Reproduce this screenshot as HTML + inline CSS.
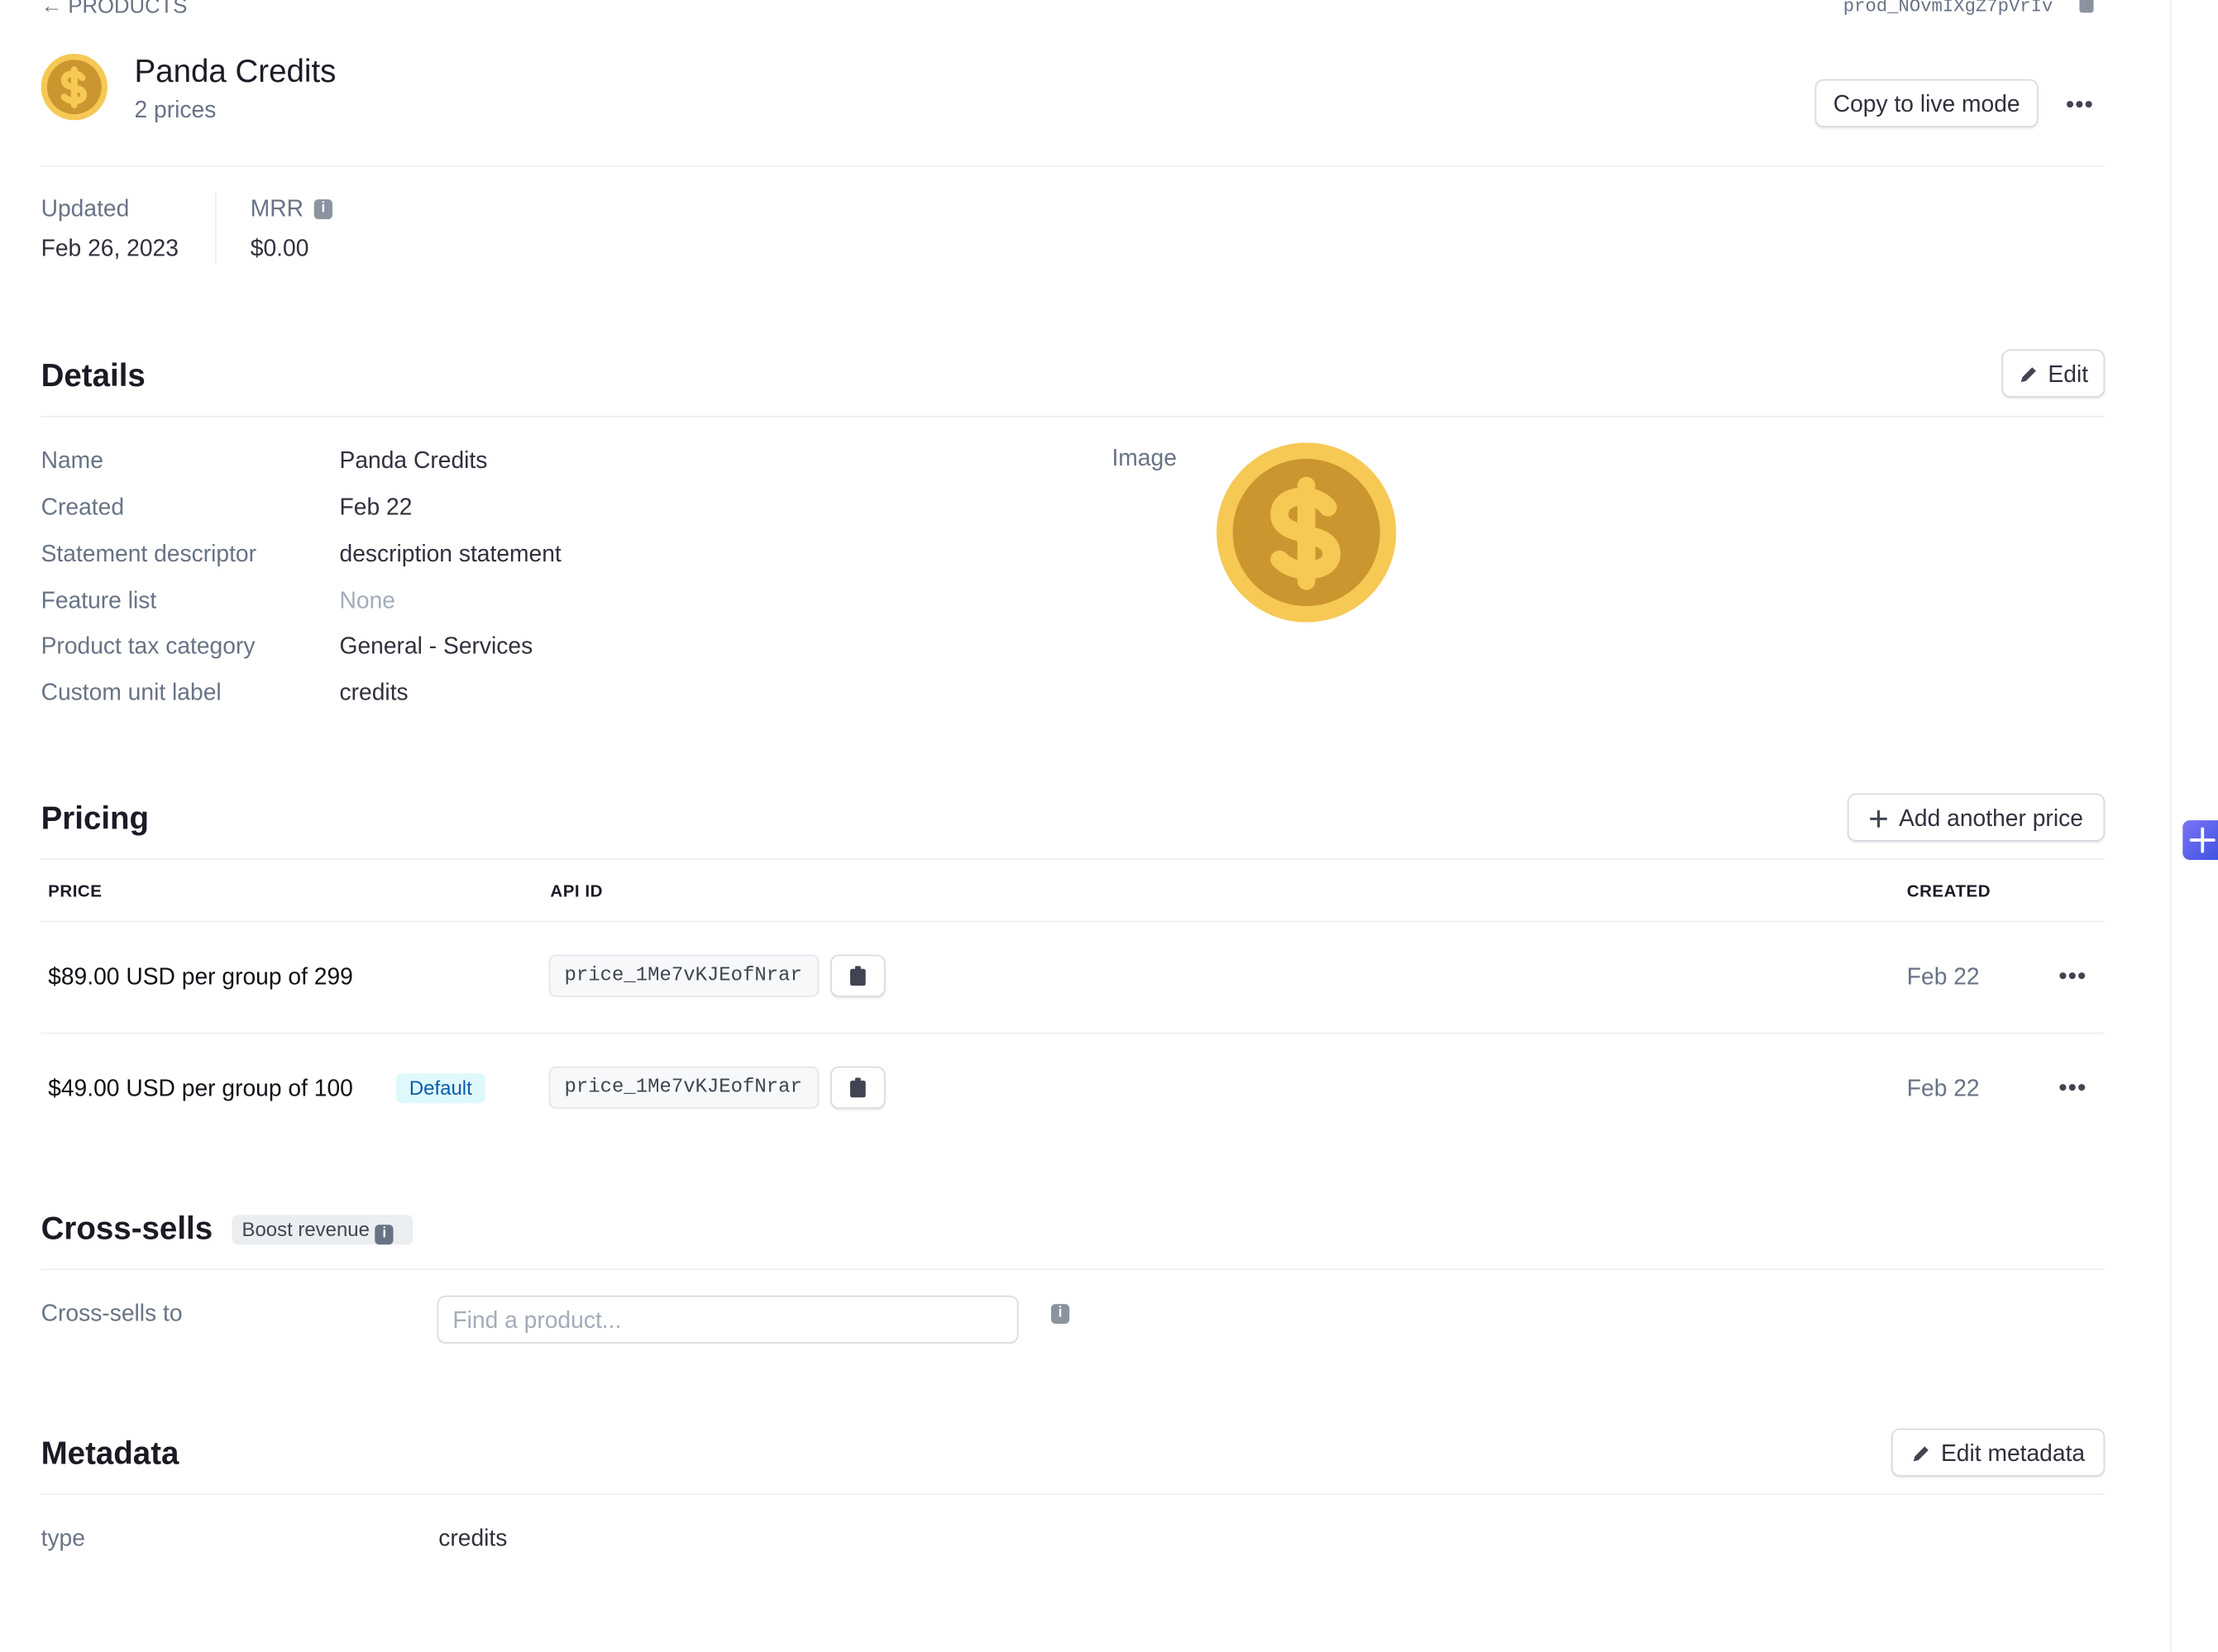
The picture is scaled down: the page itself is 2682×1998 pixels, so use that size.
<!DOCTYPE html>
<html><head><meta charset="utf-8"><style>
html,body{margin:0;padding:0;background:#fff;overflow:hidden}
body{width:2682px;height:1998px;position:relative}
#w{position:absolute;left:0;top:0;width:1568px;height:1168px;transform:scale(1.7105);transform-origin:0 0;font-family:"Liberation Sans",sans-serif;color:#30313d}
.a{position:absolute;white-space:nowrap}
.g{color:#687385}
.hr{position:absolute;left:29px;width:1459px;height:1px;background:#ebeef1}
.h{font-size:22.5px;font-weight:bold;color:#1a1b25}
.btn{position:absolute;border:1px solid #d5dbe1;border-radius:6px;background:#fff;box-shadow:0 1px 1px rgba(0,0,0,.08);box-sizing:border-box;font-size:16.5px;color:#30313d;display:flex;align-items:center;justify-content:center;gap:7px;padding-top:2px}
.m{font-family:"Liberation Mono",monospace}
.code{position:absolute;border:1px solid #e3e6ea;background:#f7f8fa;border-radius:5px;box-sizing:border-box;font-size:14px;display:flex;align-items:center;padding-left:10px;color:#414552}
.th{font-size:12px;font-weight:bold;color:#1a1b25;letter-spacing:.3px}
.r{font-size:16.5px}
.dots{position:absolute;font-size:11px;color:#414552;letter-spacing:0px}
</style></head><body><div id="w">
<div class="a g" style="left:29px;top:-4px;font-size:15px">← PRODUCTS</div>
<div class="a m g" style="left:1303px;top:-3px;font-size:13px">prod_NOvmIXgZ7pVrIv</div>
<div class="a" style="left:1470px;top:-4px;width:10px;height:13px;background:#8c93a0;border-radius:2px"></div>

<svg class="a" style="left:29px;top:38px" width="47" height="47" viewBox="0 0 100 100"><circle cx="50" cy="50" r="50" fill="#F6C955"/><circle cx="50" cy="50" r="41" fill="#CB962F"/><path d="M62 36C58 31 52 30 48 30C40 30 35 34 35 40C35 47 42 49 50 51C58 53 64 55 64 62C64 68 58 71 50 71C44 71 39 69 35 65M50 24V77" stroke="#F6C955" stroke-width="10" fill="none" stroke-linecap="round"/></svg>
<div class="a" style="left:95px;top:38px;font-size:22.5px;color:#1a1b25">Panda Credits</div>
<div class="a g" style="left:95px;top:69px;font-size:16.5px">2 prices</div>
<div class="btn" style="left:1283px;top:56px;width:158px;height:34px">Copy to live mode</div>
<div class="dots" style="left:1460px;top:68px">●●●</div>
<div class="hr" style="top:117px"></div>

<div class="a g r" style="left:29px;top:139px">Updated</div>
<div class="a r" style="left:29px;top:167px">Feb 26, 2023</div>
<div class="a" style="left:152px;top:136px;width:1px;height:50px;background:#ebeef1"></div>
<div class="a g r" style="left:177px;top:139px">MRR</div>
<div class="a" style="left:222px;top:141px;width:13px;height:14px;background:#8c93a0;border-radius:3px;color:#fff;font-size:10px;font-weight:bold;text-align:center;line-height:14px">i</div>
<div class="a r" style="left:177px;top:167px">$0.00</div>

<div class="a h" style="left:29px;top:253px">Details</div>
<div class="btn" style="left:1415px;top:247px;width:73px;height:34px"><svg width="14" height="14" viewBox="0 0 16 16"><path d="M2 14l1-4 8-8 3 3-8 8z" fill="#414552"/></svg>Edit</div>
<div class="hr" style="top:294px"></div>
<div class="a g r" style="left:29px;top:317px">Name</div><div class="a r" style="left:240px;top:317px">Panda Credits</div>
<div class="a g r" style="left:29px;top:350px">Created</div><div class="a r" style="left:240px;top:350px">Feb 22</div>
<div class="a g r" style="left:29px;top:383px">Statement descriptor</div><div class="a r" style="left:240px;top:383px">description statement</div>
<div class="a g r" style="left:29px;top:416px">Feature list</div><div class="a r" style="left:240px;top:416px;color:#a3acba">None</div>
<div class="a g r" style="left:29px;top:448px">Product tax category</div><div class="a r" style="left:240px;top:448px">General - Services</div>
<div class="a g r" style="left:29px;top:481px">Custom unit label</div><div class="a r" style="left:240px;top:481px">credits</div>
<div class="a g r" style="left:786px;top:315px">Image</div>
<svg class="a" style="left:860px;top:313px" width="127" height="127" viewBox="0 0 100 100"><circle cx="50" cy="50" r="50" fill="#F6C955"/><circle cx="50" cy="50" r="41" fill="#CB962F"/><path d="M62 36C58 31 52 30 48 30C40 30 35 34 35 40C35 47 42 49 50 51C58 53 64 55 64 62C64 68 58 71 50 71C44 71 39 69 35 65M50 24V77" stroke="#F6C955" stroke-width="10" fill="none" stroke-linecap="round"/></svg>

<div class="a h" style="left:29px;top:566px">Pricing</div>
<div class="btn" style="left:1306px;top:561px;width:182px;height:34px"><svg width="14" height="14" viewBox="0 0 14 14"><path d="M7 1v12M1 7h12" stroke="#414552" stroke-width="1.8"/></svg>Add another price</div>
<div class="hr" style="top:607px"></div>
<div class="a th" style="left:34px;top:623px">PRICE</div>
<div class="a th" style="left:389px;top:623px">API ID</div>
<div class="a th" style="left:1348px;top:623px">CREATED</div>
<div class="hr" style="top:651px"></div>
<div class="a r" style="left:34px;top:682px;color:#101117">$89.00 USD per group of 299</div>
<div class="code m" style="left:388px;top:675px;width:191px;height:30px">price_1Me7vKJEofNrar</div>
<div class="btn" style="left:587px;top:675px;width:39px;height:30px;padding-top:0"><svg width="11" height="14" viewBox="0 0 11 14"><rect x="0" y="2" width="11" height="12" rx="1.5" fill="#414552"/><rect x="3.5" y="0" width="4" height="4" rx="1" fill="#414552"/></svg></div>
<div class="a r g" style="left:1348px;top:682px">Feb 22</div>
<div class="dots" style="left:1455px;top:684px">●●●</div>
<div class="hr" style="top:730px"></div>
<div class="a r" style="left:34px;top:761px;color:#101117">$49.00 USD per group of 100</div>
<div class="a" style="left:280px;top:759px;width:63px;height:21px;background:#def8fb;border-radius:4px;color:#0b5cad;font-size:14px;text-align:center;line-height:21px">Default</div>
<div class="code m" style="left:388px;top:754px;width:191px;height:30px">price_1Me7vKJEofNrar</div>
<div class="btn" style="left:587px;top:754px;width:39px;height:30px;padding-top:0"><svg width="11" height="14" viewBox="0 0 11 14"><rect x="0" y="2" width="11" height="12" rx="1.5" fill="#414552"/><rect x="3.5" y="0" width="4" height="4" rx="1" fill="#414552"/></svg></div>
<div class="a r g" style="left:1348px;top:761px">Feb 22</div>
<div class="dots" style="left:1455px;top:763px">●●●</div>

<div class="a h" style="left:29px;top:856px">Cross-sells</div>
<div class="a" style="left:164px;top:859px;width:128px;height:21px;background:#ebeef1;border-radius:4px;font-size:14px;line-height:21px;padding-left:7px;box-sizing:border-box;color:#414552">Boost revenue <span style="display:inline-block;width:13px;height:14px;background:#687385;border-radius:3px;color:#fff;font-size:10px;font-weight:bold;text-align:center;line-height:14px;vertical-align:-1px">i</span></div>
<div class="hr" style="top:897px"></div>
<div class="a g r" style="left:29px;top:920px">Cross-sells to</div>
<div class="a" style="left:309px;top:916px;width:411px;height:34px;border:1px solid #d5dbe1;border-radius:6px;box-sizing:border-box;font-size:16.5px;color:#a3acba;line-height:34px;padding-left:10px">Find a product...</div>
<div class="a" style="left:743px;top:922px;width:13px;height:14px;background:#8c93a0;border-radius:3px;color:#fff;font-size:10px;font-weight:bold;text-align:center;line-height:14px">i</div>

<div class="a h" style="left:29px;top:1015px">Metadata</div>
<div class="btn" style="left:1337px;top:1010px;width:151px;height:34px"><svg width="14" height="14" viewBox="0 0 16 16"><path d="M2 14l1-4 8-8 3 3-8 8z" fill="#414552"/></svg>Edit metadata</div>
<div class="hr" style="top:1056px"></div>
<div class="a g r" style="left:29px;top:1079px">type</div>
<div class="a r" style="left:310px;top:1079px">credits</div>

<div class="a" style="left:1534px;top:0;width:1px;height:1168px;background:#ebeef1"></div>
<div class="a" style="left:1543px;top:580px;width:30px;height:28px;border-radius:5px;background:linear-gradient(135deg,#7b74f5,#3a4fe0)"><svg width="30" height="28" viewBox="0 0 30 28"><path d="M14 6v16M6 14h16" stroke="#fff" stroke-width="2.2" stroke-linecap="round"/></svg></div>
</div></body></html>
